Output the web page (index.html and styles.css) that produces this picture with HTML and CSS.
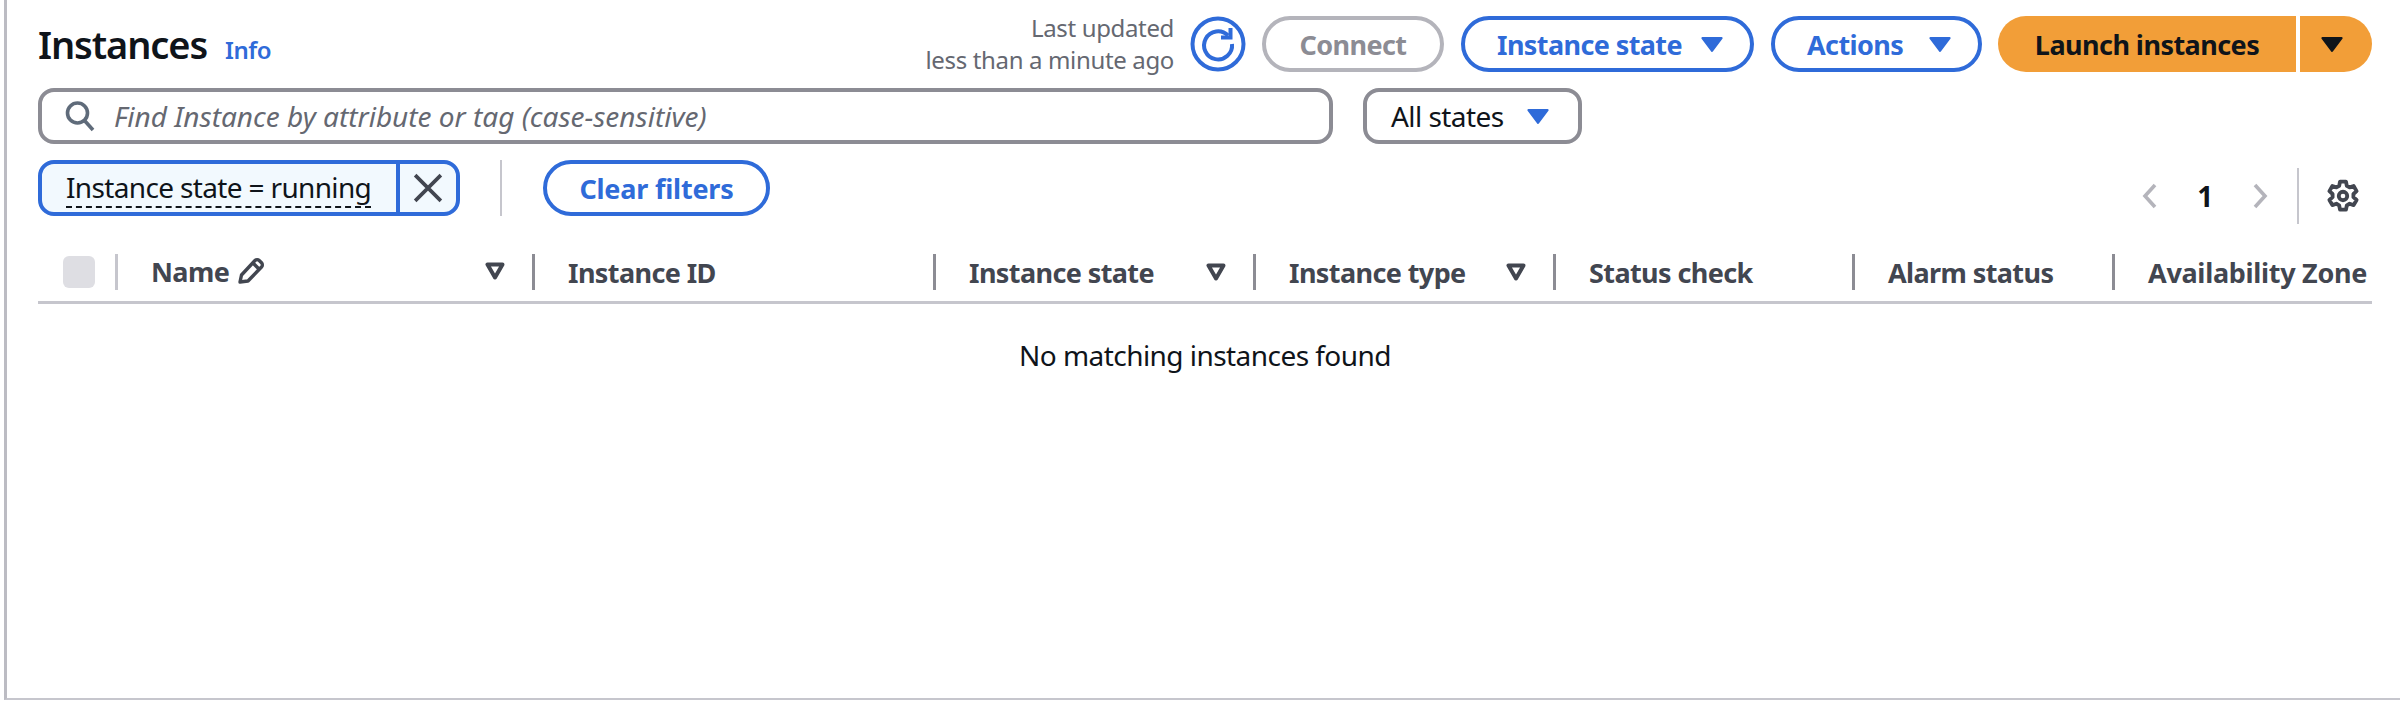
FILE: index.html
```html
<!DOCTYPE html>
<html lang="en">
<head>
  <meta charset="UTF-8">
  <meta name="viewport" content="width=device-width, initial-scale=1.0">
  <title>Instances</title>
  <link rel="stylesheet" href="styles.css">
</head>
<body>
  <div class="frame">
    <div class="top-row">
      <div class="heading">
        <h1>Instances</h1>
        <a class="info" href="#">Info</a>
      </div>
      <div class="actions">
        <p class="updated">Last updated<br>less than a minute ago</p>
        <button class="refresh" aria-label="Refresh">
          <svg viewBox="0 0 56 56" width="56" height="56" fill="none" stroke="#2f6bd9" stroke-width="4">
            <circle cx="28" cy="28" r="25.5"/>
            <path d="M38 19.5A14 14 0 1 0 42 28"/>
            <path d="M40.5 12v9.5H31"/>
          </svg>
        </button>
        <button class="btn btn-disabled btn-connect">Connect</button>
        <button class="btn btn-state">Instance state <svg class="caret" viewBox="0 0 22 16"><path d="M2 2h18l-9 12z"/></svg></button>
        <button class="btn btn-actions">Actions <svg class="caret" viewBox="0 0 22 16"><path d="M2 2h18l-9 12z"/></svg></button>
        <div class="launch">
          <button class="launch-main">Launch instances</button>
          <button class="launch-more" aria-label="More"><svg class="caret" viewBox="0 0 22 16"><path d="M2 2h18l-9 12z"/></svg></button>
        </div>
      </div>
    </div>

    <div class="search-row">
      <div class="search">
        <svg class="search-icon" viewBox="0 0 32 32" fill="none" stroke="#5f6b7a" stroke-width="3.6"><circle cx="13.5" cy="13" r="10"/><path d="M20.5 20.5 29 30"/></svg>
        <span>Find Instance by attribute or tag (case-sensitive)</span>
      </div>
      <div class="state-select"><span>All states</span> <svg class="caret" viewBox="0 0 22 16"><path d="M2 2h18l-9 12z"/></svg></div>
    </div>

    <div class="filter-row">
      <div class="token">
        <span class="token-label"><span>Instance state = running</span></span>
        <button class="token-close" aria-label="Remove">
          <svg viewBox="0 0 28 28" width="30" height="30" fill="none" stroke="#424650" stroke-width="3.4"><path d="M2 2l24 24M26 2 2 26"/></svg>
        </button>
      </div>
      <div class="sep"></div>
      <button class="btn btn-clear">Clear filters</button>
      <div class="pager">
        <svg class="chev" viewBox="0 0 16 26"><path d="M14 2 4 13l10 11"/></svg>
        <span class="page-num">1</span>
        <svg class="chev" viewBox="0 0 16 26"><path d="M2 2l10 11L2 24"/></svg>
        <div class="pager-sep"></div>
        <svg class="gear" viewBox="0 0 16 16" fill="none" stroke="#424650" stroke-width="1.8" stroke-linejoin="round">
          <path d="M6.6 1.2h2.8l.4 2 1.3.75 1.9-.65 1.4 2.4-1.5 1.35v1.5l1.5 1.35-1.4 2.4-1.9-.65-1.3.75-.4 2H6.6l-.4-2-1.3-.75-1.9.65-1.4-2.4 1.5-1.35v-1.5L1.6 5.7 3 3.3l1.9.65 1.3-.75z"/>
          <circle cx="8" cy="8" r="2"/>
        </svg>
      </div>
    </div>

    <div class="table">
      <div class="thead">
        <div class="th th-check"><span class="checkbox"></span></div>
        <div class="th th-name">
          <span>Name</span>
          <svg class="pencil" viewBox="0 0 28 28" fill="none" stroke="#424650" stroke-width="3.4" stroke-linejoin="round"><path d="M3 25l1.5-7L18 3.5a3 3 0 0 1 4.2 0l2.3 2.3a3 3 0 0 1 0 4.2L11 24z"/><path d="M16 6l6.5 6.5"/></svg>
          <svg class="sort" viewBox="0 0 20 18" fill="none" stroke="#424650" stroke-width="4" stroke-linejoin="round"><path d="M2.5 2.5h15L10 15.5z"/></svg>
        </div>
        <div class="th th-id">Instance ID</div>
        <div class="th th-state">
          <span>Instance state</span>
          <svg class="sort" viewBox="0 0 20 18" fill="none" stroke="#424650" stroke-width="4" stroke-linejoin="round"><path d="M2.5 2.5h15L10 15.5z"/></svg>
        </div>
        <div class="th th-type">
          <span>Instance type</span>
          <svg class="sort" viewBox="0 0 20 18" fill="none" stroke="#424650" stroke-width="4" stroke-linejoin="round"><path d="M2.5 2.5h15L10 15.5z"/></svg>
        </div>
        <div class="th th-check2">Status check</div>
        <div class="th th-alarm">Alarm status</div>
        <div class="th th-zone">Availability Zone</div>
      </div>
      <p class="empty">No matching instances found</p>
    </div>
  </div>
</body>
</html>
```

FILE: styles.css
```css
* { box-sizing: border-box; }
body { margin: 0; background: #fff; color: #0f141a; font-family: "Noto Sans", "Open Sans", sans-serif; font-size: 28px; letter-spacing: -0.55px; }
button { font-family: inherit; cursor: pointer; }
.frame { height: 700px; margin-left: 4px; padding: 16px 28px 0 31px; border-left: 3px solid #bcbcc3; border-bottom: 2px solid #c6c6cd; overflow: hidden; }

.top-row { display: flex; justify-content: space-between; height: 56px; }
.heading { display: flex; align-items: baseline; gap: 18px; padding-top: 2px; }
h1 { margin: 0; font-size: 38px; line-height: 52px; font-weight: 600; letter-spacing: -1.1px; }
.info { color: #2f6bd9; font-size: 24px; font-weight: 600; letter-spacing: -0.5px; text-decoration: none; }
.actions { display: flex; align-items: center; }
.updated { margin: 0 16px 0 0; color: #656871; font-size: 24px; line-height: 32px; text-align: right; letter-spacing: -0.35px; }
.refresh { padding: 0; width: 56px; height: 56px; border: none; background: none; margin-right: 16px; }
.refresh svg { display: block; }

.btn { height: 56px; padding: 0 32px; border: 4px solid #2f6bd9; border-radius: 28px; background: #fff; color: #2f6bd9; font-size: 27px; font-weight: 700; letter-spacing: -0.6px; display: inline-flex; align-items: center; white-space: nowrap; }
.btn-disabled { border-color: #b4b4bb; color: #8c8c94; }
.btn-connect { width: 182px; justify-content: center; margin-right: 17px; }
.btn-state { width: 293px; justify-content: space-between; padding-right: 26px; margin-right: 17px; }
.btn-actions { width: 211px; justify-content: space-between; padding-right: 26px; margin-right: 16px; }
.caret { width: 24px; height: 17px; fill: #2f6bd9; stroke: #2f6bd9; stroke-width: 2; stroke-linejoin: round; flex: none; }

.launch { display: flex; gap: 4px; }
.launch button { height: 56px; border: none; background: #f29e38; color: #0f141a; font-size: 27px; font-weight: 700; letter-spacing: -0.55px; padding: 0; }
.launch-main { width: 298px; border-radius: 28px 0 0 28px; }
.launch-more { width: 72px; border-radius: 0 28px 28px 0; display: flex; align-items: center; justify-content: center; }
.launch-more .caret { fill: #0f141a; stroke: #0f141a; margin-right: 8px; }

.search-row { display: flex; gap: 30px; margin-top: 16px; }
.search { width: 1295px; height: 56px; display: flex; align-items: center; gap: 18px; padding-left: 22px; border: 4px solid #8c8c94; border-radius: 16px; color: #656871; font-style: italic; letter-spacing: 0; }
.search-icon { width: 32px; height: 32px; flex: none; }
.state-select { width: 219px; height: 56px; display: flex; align-items: center; justify-content: space-between; padding: 0 28px 0 24px; border: 4px solid #8c8c94; border-radius: 16px; }

.filter-row { display: flex; align-items: flex-start; margin-top: 16px; height: 64px; }
.token { display: flex; width: 422px; height: 56px; border: 4px solid #2f6bd9; border-radius: 16px; background: #f2f9fe; }
.token-label { flex: none; width: 358px; padding-left: 24px; border-right: 4px solid #2f6bd9; line-height: 46px; white-space: nowrap; letter-spacing: -0.65px; }
.token-label span { border-bottom: 2px dashed #0f141a; display: inline-block; line-height: 38px; }
.token-close { flex: 1; padding: 0; border: none; background: none; display: flex; align-items: center; justify-content: center; }
.sep { width: 2px; height: 56px; margin: 0 41px 0 40px; background: #c6c6cd; }
.btn-clear { width: 227px; justify-content: center; letter-spacing: -0.2px; }

.pager { margin-left: auto; margin-top: 8px; height: 56px; display: flex; align-items: center; margin-right: 12px; }
.chev { width: 16px; height: 26px; fill: none; stroke: #b4b4bb; stroke-width: 3.6; }
.page-num { width: 96px; text-align: center; font-weight: 700; }
.pager-sep { width: 2px; height: 56px; background: #c6c6cd; margin: 0 28px; }
.gear { width: 34px; height: 34px; margin-left: -1px; }

.table { margin-top: 30px; }
.thead { display: grid; grid-template-columns: 80px 417px 401px 320px 300px 299px 260px 257px; height: 50px; border-bottom: 3px solid #c6c6cd; color: #424650; font-size: 27px; font-weight: 700; letter-spacing: -0.6px; overflow: hidden; }
.th { height: 36px; padding-left: 33px; border-right: 3px solid #8c8c94; display: flex; align-items: center; white-space: nowrap; }
.th-check { padding-left: 25px; border-right-color: #c6c6cd; }
.th-name { padding-bottom: 2px; }
.th-zone { border-right: none; letter-spacing: -0.3px; }
.checkbox { width: 32px; height: 32px; border-radius: 6px; background: #dedee3; }
.pencil { width: 28px; height: 28px; margin-left: 8px; }
.sort { width: 20px; height: 18px; margin-left: auto; margin-right: 27px; flex: none; }
.empty { margin: 31px 0 0; text-align: center; line-height: 40px; }
```
